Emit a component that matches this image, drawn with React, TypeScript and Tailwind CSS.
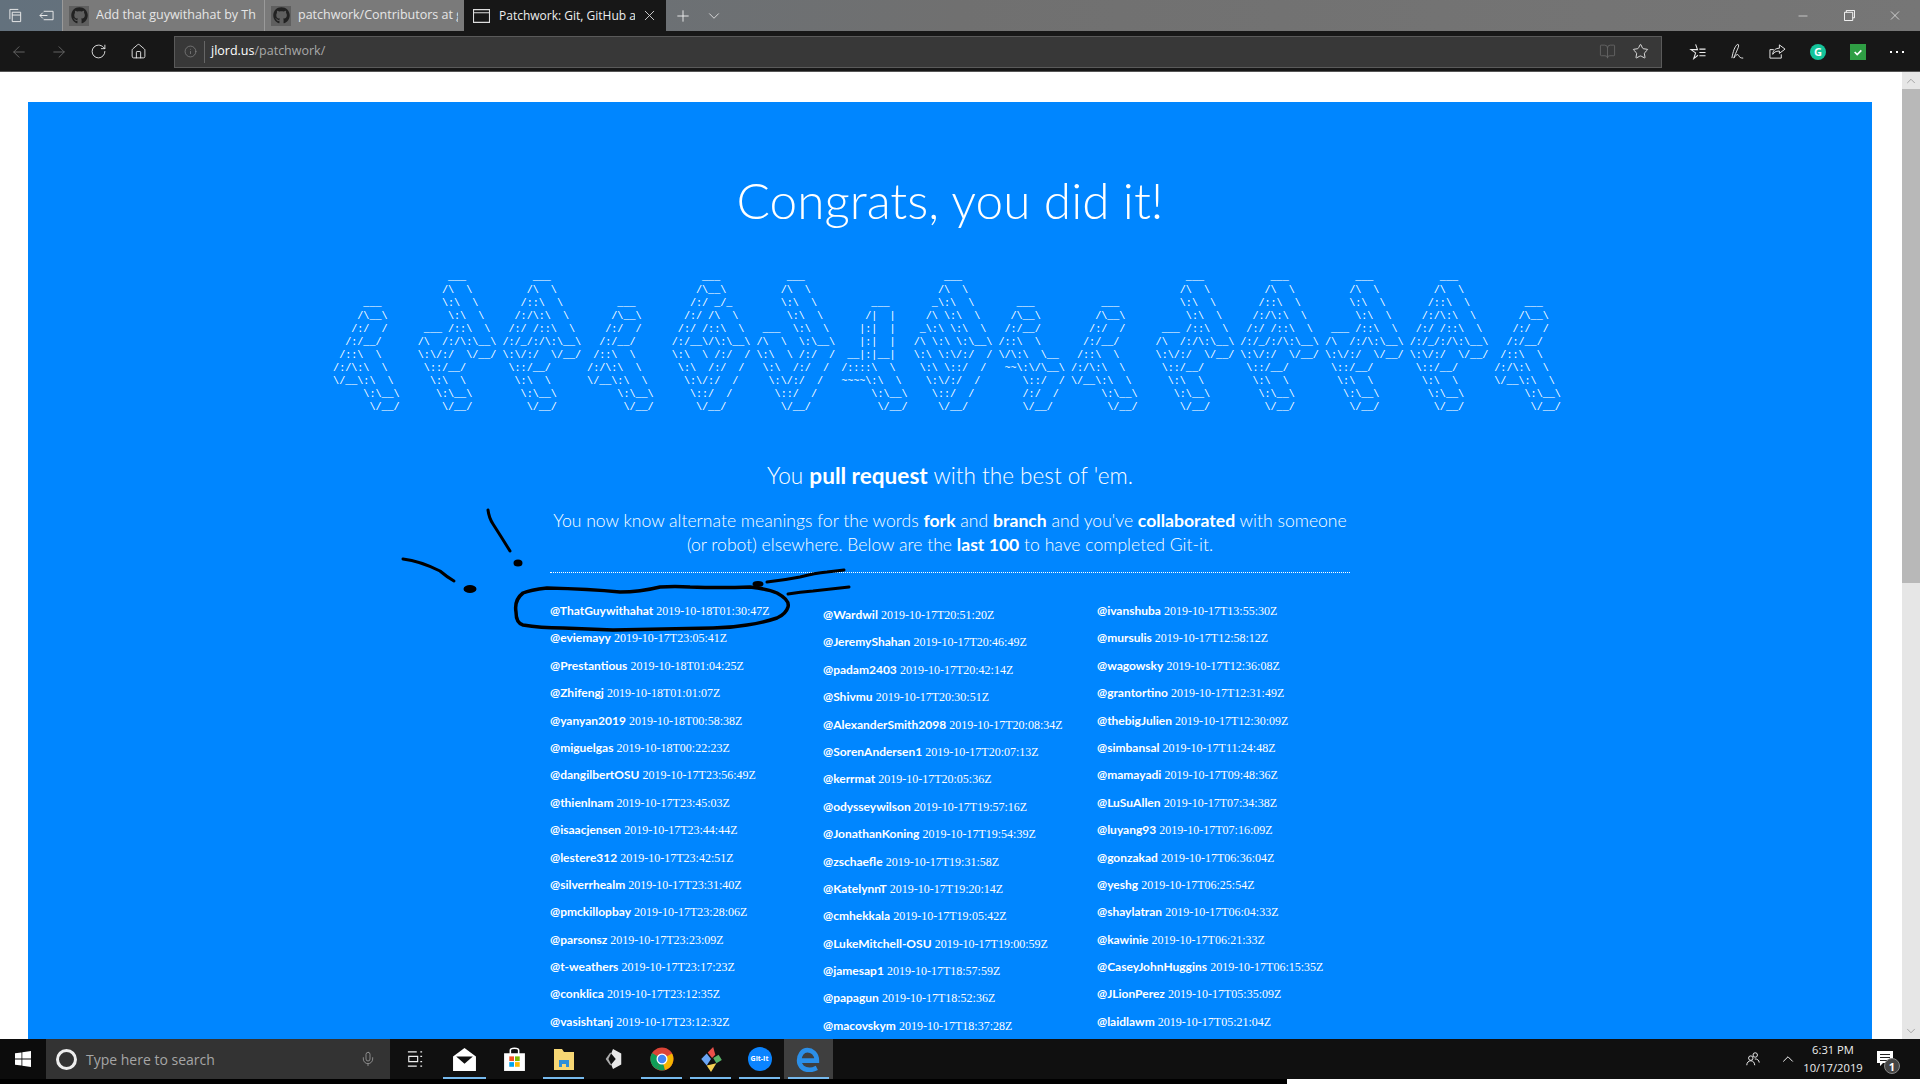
import React from "react";
import { FaGithub } from "react-icons/fa";
import { Minus, X, Plus, ChevronDown, ChevronUp, ArrowLeft, ArrowRight, RotateCw, Home, Star, Info, BookOpen, Mic } from "lucide-react";

const A = String.raw`      ___
     /\__\
    /:/  /
   /:/__/
  /::\  \
 /:/\:\  \
 \/__\:\  \
      \:\__\
       \/__/`.split("\n");
const B = String.raw`      ___
     /\  \
     \:\  \
      \:\  \
  ___ /::\  \
 /\  /:/\:\__\
 \:\/:/  \/__/
  \::/__/
   \:\  \
    \:\__\
     \/__/`.split("\n");
const C = String.raw`      ___
     /\  \
    /::\  \
   /:/\:\  \
  /:/ /::\  \
 /:/_/:/\:\__\
 \:\/:/  \/__/
  \::/__/
   \:\  \
    \:\__\
     \/__/`.split("\n");
const E = String.raw`      ___
     /\__\
    /:/ _/_
   /:/ /\  \
  /:/ /::\  \
 /:/__\/\:\__\
 \:\  \ /:/  /
  \:\  /:/  /
   \:\/:/  /
    \::/  /
     \/__/`.split("\n");
const F = String.raw`      ___
     /\  \
     \:\  \
      \:\  \
  ___  \:\  \
 /\  \  \:\__\
 \:\  \ /:/  /
  \:\  /:/  /
   \:\/:/  /
    \::/  /
     \/__/`.split("\n");
const G = String.raw`      ___
     /|  |
    |:|  |
    |:|  |
  __|:|__|
 /::::\  \
 ~~~~\:\  \
      \:\__\
       \/__/`.split("\n");
const H = String.raw`      ___
     /\  \
    _\:\  \
   /\ \:\  \
  _\:\ \:\  \
 /\ \:\ \:\__\
 \:\ \:\/:/  /
  \:\ \::/  /
   \:\/:/  /
    \::/  /
     \/__/`.split("\n");
const I = String.raw`      ___
     /\__\
    /:/__/
   /::\  \
   \/\:\  \__
    ~~\:\/\__\
       \::/  /
       /:/  /
       \/__/`.split("\n");

function buildArt() {
  const grid: string[][] = Array.from({ length: 11 }, () => Array(206).fill(" "));
  const seq: [string[], number][] = [
    [A, 0], [B, 14], [C, 28], [A, 42], [E, 56], [F, 70], [G, 84], [H, 96], [I, 108],
    [A, 122], [B, 136], [C, 150], [B, 164], [C, 178], [A, 192],
  ];
  for (const [g, x] of seq) {
    const top = 11 - g.length;
    g.forEach((line, r) => {
      [...line].forEach((ch, c) => {
        if (ch !== " ") grid[top + r][x + c] = ch;
      });
    });
  }
  return grid.map((r) => r.join("")).join("\n");
}

const col1 = [
  ["ThatGuywithahat", "2019-10-18T01:30:47Z"], ["eviemayy", "2019-10-17T23:05:41Z"], ["Prestantious", "2019-10-18T01:04:25Z"], ["Zhifengj", "2019-10-18T01:01:07Z"],
  ["yanyan2019", "2019-10-18T00:58:38Z"], ["miguelgas", "2019-10-18T00:22:23Z"], ["dangilbertOSU", "2019-10-17T23:56:49Z"], ["thienlnam", "2019-10-17T23:45:03Z"],
  ["isaacjensen", "2019-10-17T23:44:44Z"], ["lestere312", "2019-10-17T23:42:51Z"], ["silverrhealm", "2019-10-17T23:31:40Z"], ["pmckillopbay", "2019-10-17T23:28:06Z"],
  ["parsonsz", "2019-10-17T23:23:09Z"], ["t-weathers", "2019-10-17T23:17:23Z"], ["conklica", "2019-10-17T23:12:35Z"], ["vasishtanj", "2019-10-17T23:12:32Z"],
];
const col2 = [
  ["Wardwil", "2019-10-17T20:51:20Z"], ["JeremyShahan", "2019-10-17T20:46:49Z"], ["padam2403", "2019-10-17T20:42:14Z"], ["Shivmu", "2019-10-17T20:30:51Z"],
  ["AlexanderSmith2098", "2019-10-17T20:08:34Z"], ["SorenAndersen1", "2019-10-17T20:07:13Z"], ["kerrmat", "2019-10-17T20:05:36Z"], ["odysseywilson", "2019-10-17T19:57:16Z"],
  ["JonathanKoning", "2019-10-17T19:54:39Z"], ["zschaefle", "2019-10-17T19:31:58Z"], ["KatelynnT", "2019-10-17T19:20:14Z"], ["cmhekkala", "2019-10-17T19:05:42Z"],
  ["LukeMitchell-OSU", "2019-10-17T19:00:59Z"], ["jamesap1", "2019-10-17T18:57:59Z"], ["papagun", "2019-10-17T18:52:36Z"], ["macovskym", "2019-10-17T18:37:28Z"],
];
const col3 = [
  ["ivanshuba", "2019-10-17T13:55:30Z"], ["mursulis", "2019-10-17T12:58:12Z"], ["wagowsky", "2019-10-17T12:36:08Z"], ["grantortino", "2019-10-17T12:31:49Z"],
  ["thebigJulien", "2019-10-17T12:30:09Z"], ["simbansal", "2019-10-17T11:24:48Z"], ["mamayadi", "2019-10-17T09:48:36Z"], ["LuSuAllen", "2019-10-17T07:34:38Z"],
  ["luyang93", "2019-10-17T07:16:09Z"], ["gonzakad", "2019-10-17T06:36:04Z"], ["yeshg", "2019-10-17T06:25:54Z"], ["shaylatran", "2019-10-17T06:04:33Z"],
  ["kawinie", "2019-10-17T06:21:33Z"], ["CaseyJohnHuggins", "2019-10-17T06:15:35Z"], ["JLionPerez", "2019-10-17T05:35:09Z"], ["laidlawm", "2019-10-17T05:21:04Z"],
];

function Col({ rows, className }: { rows: string[][]; className: string }) {
  return (
    <ul className={className}>
      {rows.map(([u, t]) => (
        <li key={u} className="h-[27.4px] leading-[27.4px] whitespace-nowrap text-[12px] text-white">
          <span className="font-bold font-['Lato',sans-serif]">@{u}</span>{" "}
          <span className="font-['Liberation_Serif',serif]">{t}</span>
        </li>
      ))}
    </ul>
  );
}

function Tab({ title, w }: { title: string; w: string }) {
  return (
    <div className={`${w} h-full flex items-center border-l border-[#9a9a9a] bg-[#7a7a7a]`}>
      <div className="ml-[6px] w-[20px] h-[20px] bg-[#5f5f5f] flex items-center justify-center shrink-0">
        <FaGithub className="text-[#222] w-[17px] h-[17px]" />
      </div>
      <span className="ml-[7px] text-[12.5px] text-[#e6e6e6] whitespace-nowrap overflow-hidden w-[160px]">{title}</span>
    </div>
  );
}

function Chrome() {
  return (
    <svg viewBox="0 0 48 48" className="w-[24px] h-[24px]">
      <circle cx="24" cy="24" r="23" fill="#db4437" />
      <path d="M24 24 L13 44 A23 23 0 0 1 4 12 Z" fill="#0f9d58" />
      <path d="M24 24 L30 46 A23 23 0 0 1 13 44 Z" fill="#0f9d58" />
      <path d="M24 24 L30 46 A23 23 0 0 0 44 13 Z" fill="#f4b400" />
      <circle cx="24" cy="24" r="11" fill="#fff" />
      <circle cx="24" cy="24" r="8.5" fill="#4285f4" />
    </svg>
  );
}

function TaskBtn({ children, on, active, cls }: { children: React.ReactNode; on?: boolean; active?: boolean; cls?: string }) {
  return (
    <div className={`${cls ?? "w-[49px]"} h-full flex items-center justify-center relative ${active ? "bg-[#3f3f3f]" : ""}`}>
      {children}
      {on && <div className="absolute bottom-0 left-[4px] right-[4px] h-[2px] bg-[#76b9ed]" />}
    </div>
  );
}

export default function App() {
  return (
    <div className="relative w-[1920px] h-[1084px] overflow-hidden flex flex-col bg-black font-['Open_Sans',sans-serif]">
      {/* Title bar */}
      <div className="h-[31px] flex items-center bg-gradient-to-r from-[#63717d] via-[#707070] to-[#767676] shrink-0">
        <div className="w-[62px] h-full flex items-center justify-center gap-[16px] text-white">
          <svg viewBox="0 0 16 16" className="w-[15px] h-[15px]" fill="none" stroke="#eee" strokeWidth="1">
            <path d="M2 12V1.500h9M4.500 14.500V4.500h9v10zM4.500 7.500h9" />
          </svg>
          <svg viewBox="0 0 16 16" className="w-[15px] h-[15px]" fill="none" stroke="#eee" strokeWidth="1">
            <path d="M5 3.500h10v9H5M1 8h8M4 5L1 8l3 3" />
          </svg>
        </div>
        <Tab title="Add that guywithahat by Th" w="w-[202px]" />
        <Tab title="patchwork/Contributors at g" w="w-[200px]" />
        <div className="w-[202px] h-full flex items-center bg-[#171717]">
          <svg viewBox="0 0 16 13" className="ml-[9px] w-[17px] h-[14px] shrink-0" fill="none" stroke="#ddd" strokeWidth="1"><path d="M.5.500h15v12H.5zM.5 3.500h15" /></svg>
          <span className="ml-[9px] text-[12px] text-[#eee] whitespace-nowrap overflow-hidden w-[136px]">Patchwork: Git, GitHub a</span>
          <X className="ml-[6px] w-[17px] h-[17px] text-[#ddd]" strokeWidth={1.25} />
        </div>
        <Plus className="ml-[8px] w-[18px] h-[18px] text-[#eee]" strokeWidth={1.25} />
        <ChevronDown className="ml-[13px] w-[18px] h-[18px] text-[#ddd]" strokeWidth={1.25} />
        <div className="ml-auto mr-[2px] flex items-center h-full text-white">
          <Minus className="w-[46px] h-[14px]" strokeWidth={1} />
          <div className="w-[46px] flex justify-center">
            <svg viewBox="0 0 12 12" className="w-[11px] h-[11px]" fill="none" stroke="#fff" strokeWidth="1">
              <path d="M2.500 2.500V.5h9v8h-2M.5 2.500h9v9h-9z" />
            </svg>
          </div>
          <X className="w-[46px] h-[15px]" strokeWidth={1} />
        </div>
      </div>

      {/* Toolbar */}
      <div className="h-[41px] pt-[1px] flex items-center bg-[#171717] border-b border-[#555] shrink-0">
        <div className="w-[174px] flex items-center text-[#eee]">
          <ArrowLeft className="ml-[10px] w-[18px] h-[18px] text-[#666]" strokeWidth={1.25} />
          <ArrowRight className="ml-[22px] w-[18px] h-[18px] text-[#666]" strokeWidth={1.25} />
          <RotateCw className="ml-[22px] w-[17px] h-[17px]" strokeWidth={1.25} />
          <Home className="ml-[23px] w-[17px] h-[17px]" strokeWidth={1.25} />
        </div>
        <div className="w-[1488px] h-[32px] bg-[#383838] border border-[#5a5a5a] flex items-center">
          <Info className="ml-[9px] w-[13px] h-[13px] text-[#8a8a8a]" strokeWidth={1.25} />
          <div className="ml-[7px] w-px h-[22px] bg-[#666]" />
          <span className="ml-[6px] text-[12.5px] text-white">jlord.us<span className="text-[#a8a8a8]">/patchwork/</span></span>
          <BookOpen className="ml-auto w-[17px] h-[17px] text-[#666]" strokeWidth={1.25} />
          <Star className="ml-[16px] mr-[12px] w-[17px] h-[17px] text-[#eee]" strokeWidth={1.25} />
        </div>
        <div className="flex-1 flex items-center text-[#eee]">
          <svg viewBox="0 0 18 18" className="ml-[27px] w-[17px] h-[17px]" fill="none" stroke="#eee" strokeWidth="1.100">
            <path d="M7 1.500 9 7h-7l5 3.500L5 16.500l4.500-3.500M11 6.500h6.500M11 10h6.500M11 13.500h6.500" />
          </svg>
          <svg viewBox="0 0 18 18" className="ml-[24px] w-[17px] h-[17px]" fill="none" stroke="#eee" strokeWidth="1">
            <path d="M2 16C3 10 5 3 8 1.500c1.500-.5 1.500 2 0 5C7 9 5 13 4 16c2-3 4-5 5-3s2 3 5 3" />
          </svg>
          <svg viewBox="0 0 18 18" className="ml-[22px] w-[17px] h-[17px]" fill="none" stroke="#eee" strokeWidth="1">
            <path d="M11 2l6 4.500-6 4.500V8.500C7 8.500 5 10 4 12c0-4 3-6.500 7-6.500zM13 12v4H1V7h4" />
          </svg>
          <div className="ml-[24px] w-[16px] h-[16px] rounded-full bg-[#15c39a] flex items-center justify-center text-white text-[11px] font-bold leading-none">G</div>
          <div className="ml-[24px] w-[16px] h-[16px] bg-[#2f9e44] flex items-center justify-center">
            <svg viewBox="0 0 12 12" className="w-[10px] h-[10px]" fill="none" stroke="#fff" strokeWidth="2"><path d="M2 6l3 3 5-5" /></svg>
          </div>
          <div className="ml-[24px] flex gap-[4px]">
            <div className="w-[2px] h-[2px] bg-white" />
            <div className="w-[2px] h-[2px] bg-white" />
            <div className="w-[2px] h-[2px] bg-white" />
          </div>
        </div>
      </div>

      {/* Page */}
      <div className="flex-1 min-h-0 flex bg-white overflow-hidden">
        <div className="flex-1 min-w-0 pt-[30px] pl-[28px] pr-[30px]">
          <div className="h-[1500px] bg-[#0086ff] text-white flex flex-col items-center font-['Lato',sans-serif] font-light">
            <h1 className="mt-[63px] text-[49.5px] leading-[70px] font-light">Congrats, you did it!</h1>
            <pre className="mt-[36px] font-['Liberation_Mono',monospace] text-[10.08px] leading-[13px] font-normal">{buildArt()}</pre>
            <p className="mt-[47px] text-[22.6px] leading-[30px]">You <b className="font-bold">pull request</b> with the best of 'em.</p>
            <p className="mt-[18px] w-[800px] text-center text-[17.6px] leading-[24px]">
              You now know alternate meanings for the words <b className="font-bold">fork</b> and <b className="font-bold">branch</b> and you've <b className="font-bold">collaborated</b> with someone (or robot) elsewhere. Below are the <b className="font-bold">last 100</b> to have completed Git-it.
            </p>
            <div className="w-[800px] mt-[15px] border-t border-dotted border-white flex pt-[24px] font-normal">
              <Col rows={col1} className="w-[273px]" />
              <Col rows={col2} className="w-[274px] mt-[4px]" />
              <Col rows={col3} className="flex-1" />
            </div>
          </div>
        </div>
        <div className="w-[18px] bg-[#e6e6e6] flex flex-col items-center relative">
          <div className="h-[17px] w-full bg-[#e6e6e6] flex items-center justify-center"><ChevronUp className="w-[14px] h-[14px] text-[#777]" strokeWidth={1} /></div>
          <div className="h-[494px] w-full bg-[#b8b8b8]" />
          <ChevronDown className="absolute bottom-[1px] w-[14px] h-[14px] text-[#777]" strokeWidth={1} />
        </div>
      </div>

      {/* Taskbar */}
      <div className="relative h-[40px] shrink-0 bg-[#101010] flex items-center">
        <div className="w-[46px] h-full flex items-center justify-center bg-[#0c0c0c]">
          <svg viewBox="0 0 16 16" className="w-[16px] h-[16px]" fill="#fff"><path d="M0 2.300 6.500 1.400V7.600H0zM7.300 1.300 16 0V7.600H7.300zM0 8.400H6.500V14.600L0 13.700zM7.300 8.400H16V16L7.300 14.700z" /></svg>
        </div>
        <div className="w-[344px] h-full bg-[#333] flex items-center">
          <div className="ml-[10px] w-[21px] h-[21px] rounded-full border-[3px] border-[#eee]" />
          <span className="ml-[9px] text-[14px] text-[#a6a6a6]">Type here to search</span>
          <Mic className="ml-auto mr-[14px] w-[16px] h-[16px] text-[#9a9a9a]" strokeWidth={1.25} />
        </div>
        <TaskBtn>
          <svg viewBox="0 0 18 18" className="w-[16px] h-[16px]" fill="none" stroke="#eee" strokeWidth="1.300"><path d="M1 1h10M1 17h10M2 6h10v6H2zM15 1h2M15 6h2M15 12h2M15 17h2" /></svg>
        </TaskBtn>
        <TaskBtn on cls="w-[51px]">
          <svg viewBox="0 0 24 24" className="w-[25px] h-[25px]"><path d="M1 9 12 1l11 8v14H1z" fill="#fff" /><path d="M4 9h16l-8 7z" fill="#101010" /></svg>
        </TaskBtn>
        <TaskBtn>
          <svg viewBox="0 0 24 24" className="w-[25px] h-[25px]"><path d="M2 6h20v17H2z" fill="#fff" /><path d="M8 7V3c0-2.500 8-2.500 8 0v4" fill="none" stroke="#fff" strokeWidth="1.500" /><path d="M7 9h4.500v4.500H7z" fill="#f25022" /><path d="M12.500 9H17v4.500h-4.500z" fill="#7fba00" /><path d="M7 14.500h4.500V19H7z" fill="#00a4ef" /><path d="M12.500 14.500H17V19h-4.500z" fill="#ffb900" /></svg>
        </TaskBtn>
        <TaskBtn on>
          <svg viewBox="0 0 24 24" className="w-[24px] h-[24px]"><path d="M2 2h8l2 3h10v18H2z" fill="#f7d774" /><path d="M7 20v-7h10v7h-3v-3h-4v3z" fill="#2e8fd8" /></svg>
        </TaskBtn>
        <TaskBtn>
          <svg viewBox="0 0 24 24" className="w-[22px] h-[22px]"><path d="M12 1 21 6v12l-9 5-2-5 5-6-5-6z" fill="#e8e8e8" /><path d="M4 12l5-7 1 1-3 6 3 6-1 1z" fill="#aaa" /></svg>
        </TaskBtn>
        <TaskBtn on><Chrome /></TaskBtn>
        <TaskBtn on>
          <svg viewBox="0 0 24 24" className="w-[26px] h-[26px]"><path d="M3 12l5-5 4 5-4 6z" fill="#6aa5f5" /><path d="M9 6l5-5 2 7-3 3z" fill="#e8504a" /><path d="M14 11l5-3 3 5-5 3z" fill="#58b368" /><path d="M8 18l9-2-5 8z" fill="#f5cf52" /></svg>
        </TaskBtn>
        <TaskBtn on>
          <div className="w-[24px] h-[24px] rounded-full bg-[#0a84ff] flex items-center justify-center text-white text-[7px] font-bold">Git-It</div>
        </TaskBtn>
        <TaskBtn on active>
          <svg viewBox="0 0 24 24" className="w-[25px] h-[25px]" fill="none" stroke="#2b8fe8" strokeWidth="4.500"><path d="M4 13h16C20 6 15 3 11 3 6 3 3 8 3 13c0 6 5 9 10 9 3 0 5-1 7-2" /></svg>
        </TaskBtn>
        <div className="ml-auto h-full flex items-center text-white">
          <svg viewBox="0 0 18 18" className="w-[16px] h-[16px]" fill="none" stroke="#eee" strokeWidth="1.100"><circle cx="11.500" cy="4.500" r="2.500" /><circle cx="6.500" cy="8" r="2.500" /><path d="M2 16c0-3 2-5 4.500-5s4 1.500 4.500 5M11 9c2.500-.5 5 1.500 5 4" /></svg>
          <ChevronUp className="ml-[18px] w-[18px] h-[18px]" strokeWidth={1.25} />
          <div className="w-[72px] text-center text-[11.2px] leading-[18px] text-[#eee]">
            <div>6:31 PM</div>
            <div>10/17/2019</div>
          </div>
          <div className="relative ml-[8px] mr-[27px] w-[16px] h-[16px]">
            <svg viewBox="0 0 16 16" className="w-[16px] h-[16px]" fill="#fff"><path d="M0 0h16v12H6l-3 3v-3H0z" /><path d="M3 3.500h10M3 6.500h10M3 9.500h7" stroke="#222" /></svg>
            <div className="absolute top-[7px] left-[7px] w-[16px] h-[16px] rounded-full bg-[#444] border border-[#888] flex items-center justify-center text-[11px] font-bold leading-none">1</div>
          </div>
        </div>
      </div>

      {/* Bottom strip */}
      <div className="h-[5px] flex shrink-0">
        <div className="w-[1287px] bg-black" />
        <div className="flex-1 bg-white" />
      </div>

      {/* Hand-drawn marks */}
      <svg className="absolute inset-0 pointer-events-none" width="1920" height="1084" viewBox="0 0 1920 1084" fill="none" stroke="#000" strokeWidth="3" strokeLinecap="round" strokeLinejoin="round">
        <path d="M488 510 Q489 518 493 524 Q502 538 510 551" />
        <ellipse cx="518" cy="563" rx="3" ry="2" fill="#000" />
        <path d="M403 559 Q420 561 440 571 Q447 577 454 581" />
        <ellipse cx="470" cy="589" rx="5" ry="2.500" fill="#000" />
        <path d="M547 588 Q590 589 620 592 Q640 592 660 587 Q675 586 690 587 Q720 588 750 587 Q768 589 777 593 Q790 600 788 607 Q786 614 777 618 Q762 623 747 625 Q730 628 713 628 L663 629 L613 630 L563 628 Q540 628 523 625 Q516 623 516 612 Q514 600 523 593 Q530 590 547 588Z" strokeWidth="3.500" />
        <path d="M767 582 Q785 580 800 577 Q815 573 827 572 L844 570" />
        <ellipse cx="758" cy="584" rx="4" ry="1.500" fill="#000" />
        <path d="M788 594 Q800 592 813 591 L849 587" />
      </svg>
    </div>
  );
}
